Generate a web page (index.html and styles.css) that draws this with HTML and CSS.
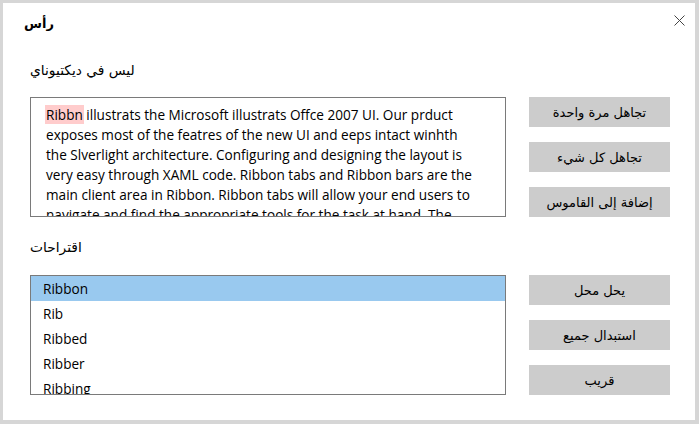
FILE: index.html
```html
<!DOCTYPE html>
<html lang="en">
<head>
<meta charset="utf-8">
<title>Spell Checker</title>
<link rel="stylesheet" href="styles.css">
</head>
<body>
<div class="window">
  <div class="titlebar">
    <h1 class="title">رأس</h1>
    <button class="close" aria-label="Close">
      <svg width="11" height="11" viewBox="0 0 11 11"><path d="M0.5 0.5L10.5 10.5M10.5 0.5L0.5 10.5" stroke="#444" stroke-width="1" fill="none"/></svg>
    </button>
  </div>
  <div class="content">
    <div class="label">ليس في ديكتيوناي</div>
    <div class="row">
      <div class="editor">
        <span class="error">Ribbn</span> illustrats the Microsoft illustrats Offce 2007 UI. Our prduct<br>
        exposes most of the featres of the new UI and eeps intact winhth<br>
        the Slverlight architecture. Configuring and designing the layout is<br>
        very easy through XAML code. Ribbon tabs and Ribbon bars are the<br>
        main client area in Ribbon. Ribbon tabs will allow your end users to<br>
        navigate and find the appropriate tools for the task at hand. The
      </div>
      <div class="actions">
        <button class="btn">تجاهل مرة واحدة</button>
        <button class="btn">تجاهل كل شيء</button>
        <button class="btn">إضافة إلى القاموس</button>
      </div>
    </div>
    <div class="label label-second">اقتراحات</div>
    <div class="row row-second">
      <ul class="list">
        <li class="selected">Ribbon</li>
        <li>Rib</li>
        <li>Ribbed</li>
        <li>Ribber</li>
        <li>Ribbing</li>
      </ul>
      <div class="actions">
        <button class="btn">يحل محل</button>
        <button class="btn">استبدال جميع</button>
        <button class="btn">قريب</button>
      </div>
    </div>
  </div>
</div>
</body>
</html>
```

FILE: styles.css
```css
html, body {
  margin: 0;
  padding: 0;
  background: #ffffff;
}

.window {
  width: 699px;
  height: 424px;
  box-sizing: border-box;
  border: 3px solid #d6d6d6;
  border-right-width: 4px;
  border-bottom-width: 4px;
  background: #ffffff;
  font-family: "Open Sans", "DejaVu Sans", sans-serif;
  color: #000000;
}

.titlebar {
  display: flex;
  justify-content: space-between;
  align-items: flex-start;
  height: 57px;
  padding-left: 21px;
}

.title {
  margin: 11px 0 0 0;
  font-family: "DejaVu Sans", sans-serif;
  font-size: 13px;
  font-weight: bold;
  line-height: 20px;
}

.close {
  display: block;
  margin: 12px 10px 0 0;
  padding: 0;
  width: 11px;
  height: 11px;
  border: 0;
  background: none;
}

.close svg {
  display: block;
}

.content {
  padding: 0 25px 0 27px;
}

.label {
  font-family: "DejaVu Sans", sans-serif;
  font-size: 13.8px;
  line-height: 20px;
  height: 20px;
}

.label-second {
  margin-top: 20px;
}

.row {
  display: flex;
  gap: 23px;
  margin-top: 17px;
}

.row-second {
  margin-top: 18px;
}

.editor {
  width: 476px;
  height: 120px;
  box-sizing: border-box;
  border: 1px solid #7a7a7a;
  padding: 7px 15px 0 15px;
  overflow: hidden;
  font-size: 13.6px;
  line-height: 20px;
  white-space: nowrap;
}

.error {
  background: #ffcccc;
  padding: 0 1px;
  margin: 0 -1px;
}

.actions {
  display: flex;
  flex-direction: column;
  gap: 15px;
  width: 141px;
}

.btn {
  height: 30px;
  border: 0;
  padding: 0;
  background: #cccccc;
  font-family: "DejaVu Sans", sans-serif;
  font-size: 13px;
  color: #000000;
}

.list {
  width: 476px;
  height: 120px;
  box-sizing: border-box;
  border: 1px solid #7a7a7a;
  margin: 0;
  padding: 0;
  list-style: none;
  overflow: hidden;
}

.list li {
  height: 25px;
  line-height: 26px;
  padding-left: 12px;
  font-size: 13.6px;
}

.list li.selected {
  background: #99c9ef;
}
```
